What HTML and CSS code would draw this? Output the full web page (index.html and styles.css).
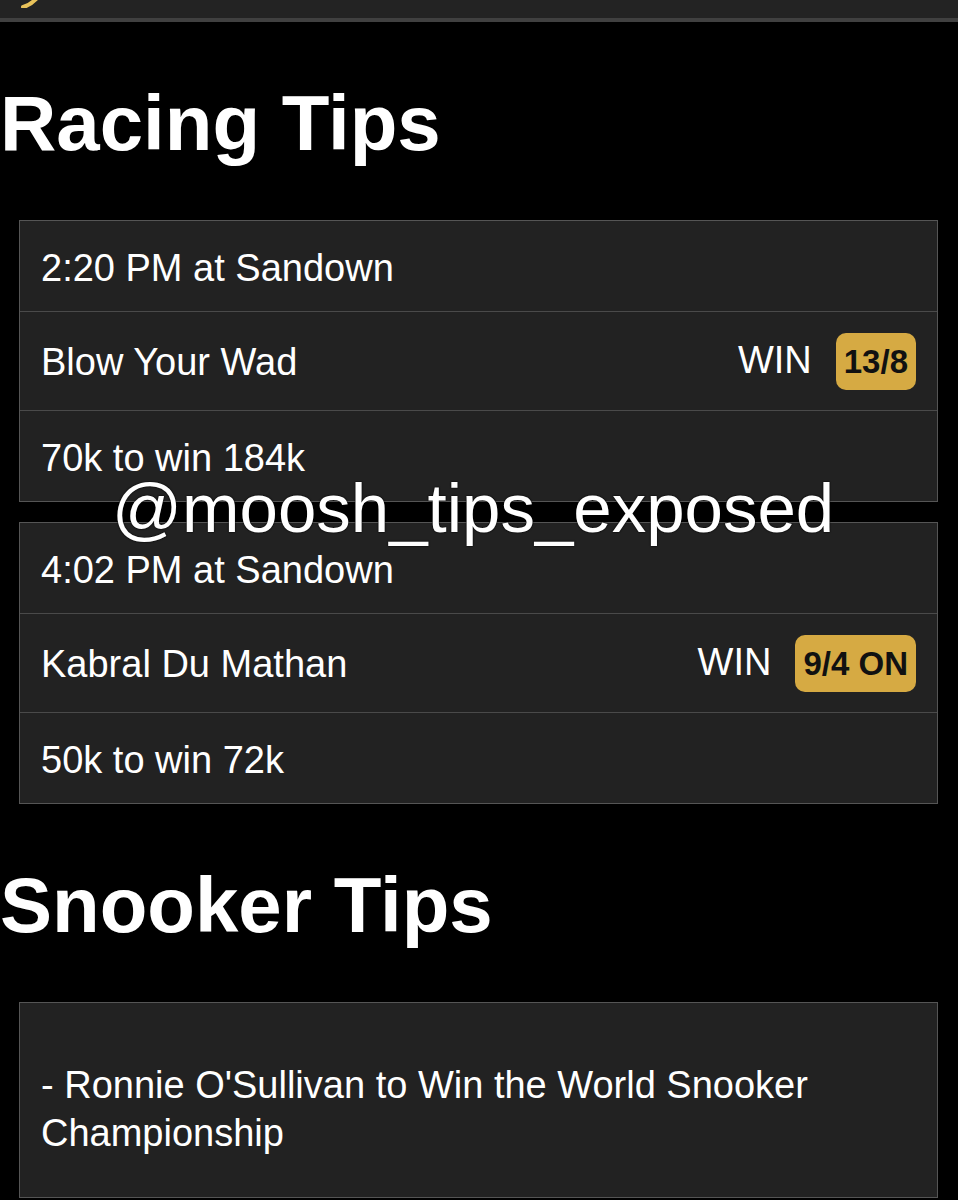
FILE: index.html
```html
<!DOCTYPE html>
<html lang="en">
<head>
  <meta charset="UTF-8">
  <meta name="viewport" content="width=device-width, initial-scale=1.0">
  <title>Tips</title>
  <link rel="stylesheet" href="styles.css">
</head>
<body>
  <header class="topbar">
    <svg class="logo" width="20" height="8" viewBox="0 0 20 8">
      <path d="M2 7 C7 6 11 3 15 -1" stroke="#e8c25a" stroke-width="4" stroke-linecap="round" fill="none"/>
    </svg>
  </header>

  <main class="content">
    <h2 class="section-title">Racing Tips</h2>

    <div class="tip-card">
      <div class="tip-row">2:20 PM at Sandown</div>
      <div class="tip-row selection">
        <span class="horse">Blow Your Wad</span>
        <span class="bet">
          <span class="bet-type">WIN</span>
          <span class="odds">13/8</span>
        </span>
      </div>
      <div class="tip-row">70k to win 184k</div>
    </div>

    <div class="tip-card">
      <div class="tip-row">4:02 PM at Sandown</div>
      <div class="tip-row selection">
        <span class="horse">Kabral Du Mathan</span>
        <span class="bet">
          <span class="bet-type">WIN</span>
          <span class="odds">9/4 ON</span>
        </span>
      </div>
      <div class="tip-row">50k to win 72k</div>
    </div>

    <h2 class="section-title">Snooker Tips</h2>

    <div class="tip-card">
      <div class="tip-row note">- Ronnie O'Sullivan to Win the World Snooker Championship</div>
    </div>
  </main>

  <div class="watermark">@moosh_tips_exposed</div>
</body>
</html>
```

FILE: styles.css
```css
body {
  font-family: 'Liberation Sans', Arial, Helvetica, sans-serif;
  margin: 0;
  padding: 0;
  background-color: #000;
  color: #fff;
  overflow: hidden;
}
.topbar {
  height: 18px;
  background-color: #232323;
  border-bottom: 4px solid #404040;
}
.logo {
  display: block;
  margin-left: 21px;
}
.content {
  padding: 0 20px 0 19px;
}
.section-title {
  font-size: 78px;
  line-height: 90px;
  font-weight: bold;
  margin: 56px 0 52px -19px;
}
.tip-card {
  background-color: #222;
  border: 1px solid #555;
  margin-bottom: 20px;
}
.tip-row {
  display: flex;
  align-items: center;
  justify-content: space-between;
  font-size: 38px;
  line-height: 48px;
  padding: 23px 21px 19px;
}
.tip-row + .tip-row {
  border-top: 1px solid #4a4a4a;
}
.selection {
  padding: 21px 21px 20px;
}
.bet {
  display: flex;
  align-items: baseline;
  gap: 24px;
}
.odds {
  background-color: #d6aa43;
  color: #111;
  font-weight: bold;
  font-size: 33px;
  line-height: 57px;
  padding: 0 8px;
  border-radius: 10px;
}
.note {
  display: block;
  padding: 58px 21px 40px;
}
.watermark {
  position: absolute;
  top: 474px;
  left: 112px;
  font-size: 69px;
  line-height: 70px;
  color: #fff;
  text-shadow: 0 0 2px #000, 0 0 1px #000;
  white-space: nowrap;
}
```
